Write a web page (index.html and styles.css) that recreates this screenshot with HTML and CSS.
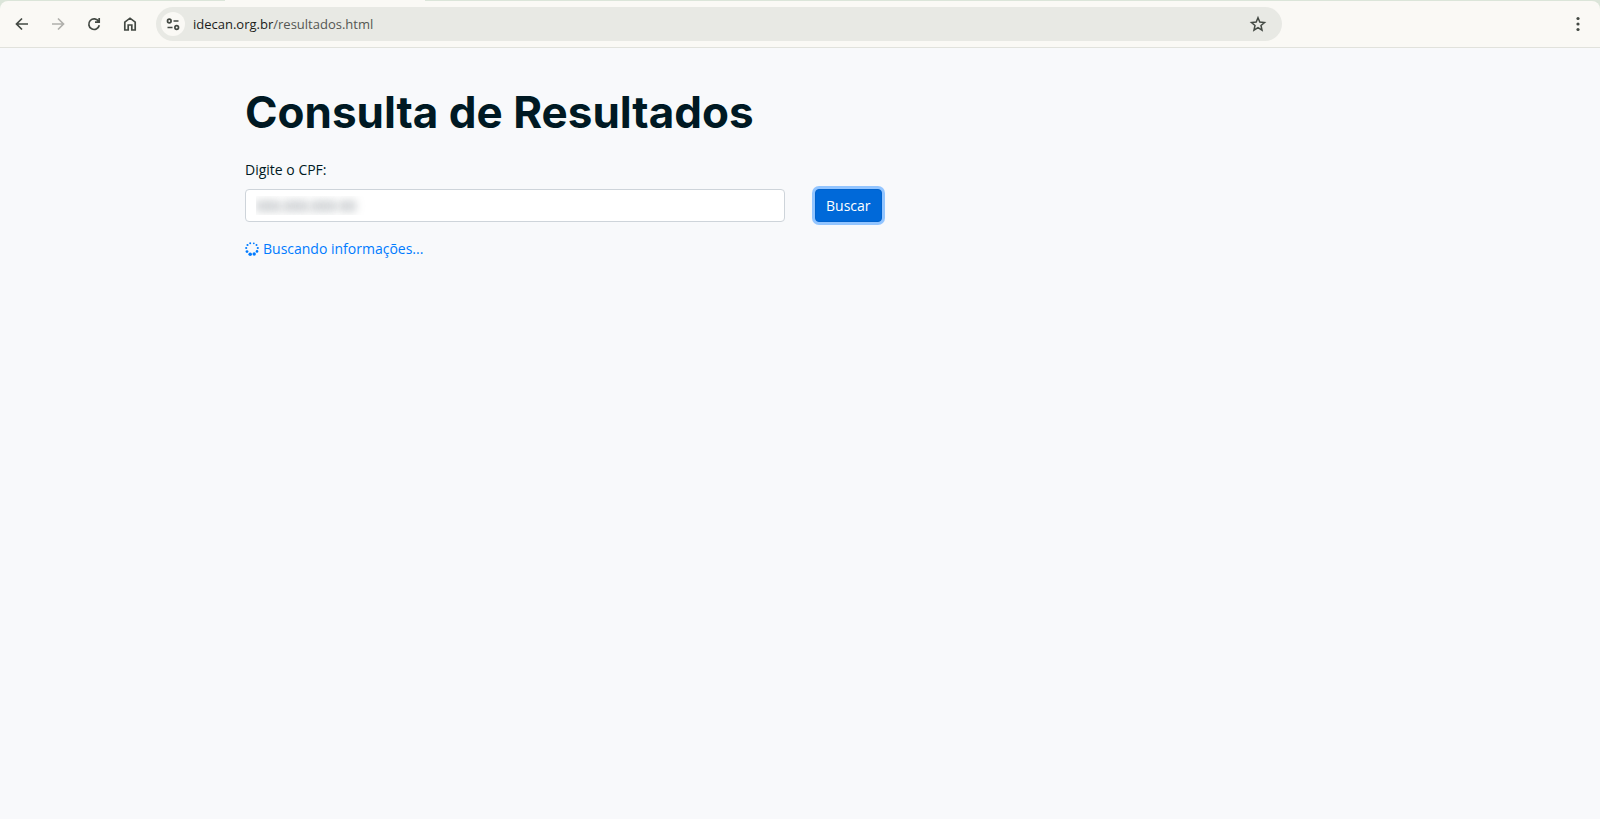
FILE: index.html
```html
<!DOCTYPE html>
<html lang="pt-br">

	<head>
		<meta charset="UTF-8">
		<title>Consulta de Resultados</title>
		<link rel="stylesheet" href="styles.css">
	</head>

	<body>
		<header class="browser">
			<div class="tabstrip">
				<div class="tab"></div>
			</div>
			<div class="toolbar">
				<button type="button" class="navBtn" aria-label="Voltar">
					<svg width="16" height="16" viewBox="0 0 16 16"><path d="M14 8H3M8 2.500L2.500 8L8 13.500" /></svg>
				</button>
				<button type="button" class="navBtn" aria-label="Avançar" disabled>
					<svg width="16" height="16" viewBox="0 0 16 16"><path d="M2 8H13M8 2.500L13.500 8L8 13.500" /></svg>
				</button>
				<button type="button" class="navBtn" aria-label="Recarregar">
					<svg width="16" height="16" viewBox="0 0 16 16"><path d="M12.700 5.500A5.300 5.300 0 1 0 13.300 9.300M13.200 2V6.200H9" /></svg>
				</button>
				<button type="button" class="navBtn" aria-label="Página inicial">
					<svg width="16" height="16" viewBox="0 0 16 16"><path d="M2.800 6.200L8 2.200L13.200 6.200V14H9.800V9H6.200V14H2.800Z" /></svg>
				</button>
				<div class="omnibox">
					<button type="button" class="siteInfo" aria-label="Informações do site">
						<svg width="16" height="16" viewBox="0 0 16 16"><circle cx="4.300" cy="5" r="1.800" /><path d="M8.500 5H13.500M2.500 11.500H7.500" /><circle cx="11.700" cy="11.500" r="1.800" /></svg>
					</button>
					<div class="url">idecan.org.br<span>/resultados.html</span></div>
					<button type="button" class="star" aria-label="Favoritos">
						<svg width="18" height="18" viewBox="0 0 18 18"><path d="M9 2.800L10.800 7.100L15.500 7.500L12 10.500L13 15.100L9 12.600L5 15.100L6 10.500L2.500 7.500L7.200 7.100Z" /></svg>
					</button>
				</div>
				<button type="button" class="navBtn menu" aria-label="Menu">
					<svg width="16" height="16" viewBox="0 0 16 16"><circle cx="8" cy="2.500" r="1.600" /><circle cx="8" cy="8" r="1.600" /><circle cx="8" cy="13.500" r="1.600" /></svg>
				</button>
			</div>
		</header>

		<main class="container">
			<h1>Consulta de Resultados</h1>
			<form>
				<label for="cpf">Digite o CPF:</label>
				<div class="row">
					<input type="text" id="cpf" class="cpf" value="000.000.000-00">
					<div class="col">
						<button type="button" class="btn">Buscar</button>
					</div>
				</div>
			</form>
			<p class="status">
				<svg class="spinner" width="14" height="14" viewBox="0 0 14 14">
					<circle cx="8.800" cy="1.300" r="0.900" />
					<circle cx="11.500" cy="3" r="1" />
					<circle cx="12.800" cy="6" r="1.100" />
					<circle cx="12" cy="9.400" r="1.300" />
					<circle cx="9.200" cy="12" r="1.700" />
					<circle cx="5.200" cy="12.200" r="1.800" />
					<circle cx="2" cy="9.600" r="1.400" />
					<circle cx="1.200" cy="6" r="1.100" />
					<circle cx="2.500" cy="3" r="1.100" />
					<circle cx="5.200" cy="1.300" r="1" />
				</svg>
				<span>Buscando informações...</span>
			</p>
		</main>
	</body>

</html>
```
FILE: styles.css
```css
* {
	margin: 0;
	padding: 0;
	box-sizing: border-box;
}

body {
	background: #f8f9fb;
	color: #001923;
	font: 14px/21px "Open Sans", sans-serif;
}

button {
	border: 0;
	background: none;
	font: inherit;
}

/* barra do navegador */
.browser {
	background: #dbe5d9;
	border-bottom: 1px solid #e1e2dc;
}

.tabstrip {
	height: 1px;
	padding-left: 225px;
}

.tab {
	width: 200px;
	height: 1px;
	background: #faf9f5;
}

.toolbar {
	display: flex;
	align-items: center;
	height: 46px;
	padding: 0 4px;
	background: #faf9f5;
	border-radius: 8px 8px 0 0;
}

.toolbar svg {
	fill: none;
	stroke: #434943;
	stroke-width: 1.7;
}

.navBtn {
	display: flex;
	align-items: center;
	justify-content: center;
	width: 36px;
	height: 34px;
}

.toolbar .navBtn:disabled svg {
	stroke: #b0b0ac;
}

.toolbar .menu svg {
	fill: #434943;
	stroke: none;
}

.omnibox {
	display: flex;
	flex: 1;
	align-items: center;
	height: 34px;
	margin: 0 278px 0 8px;
	padding: 0 15px 0 5px;
	background: #e8e9e4;
	border-radius: 17px;
}

.siteInfo {
	display: flex;
	align-items: center;
	justify-content: center;
	width: 24px;
	height: 24px;
	border-radius: 50%;
	background: #faf9f5;
}

.url {
	flex: 1;
	margin-left: 8px;
	color: #1b1c1a;
	font-size: 13px;
}

.url span {
	color: #555753;
}

.star {
	display: flex;
}

.star svg {
	stroke-width: 1.5;
}

/* conteudo */
.container {
	max-width: 1140px;
	margin: 0 auto;
	padding: 40px 15px;
}

h1 {
	margin-bottom: 23px;
	font: 700 44px/48px Inter, sans-serif;
}

label {
	display: block;
	margin-bottom: 9px;
}

.row {
	display: grid;
	grid-template-columns: 1fr 1fr;
	gap: 30px;
}

.cpf {
	height: 33px;
	padding: 0 10px;
	border: 1px solid #ced4da;
	border-radius: 4px;
	background: #fff;
	color: transparent;
	font: inherit;
	text-shadow: 0 0 8px #6c757d;
}

.btn {
	display: block;
	height: 33px;
	padding: 0 10px;
	border: 1px solid #0062cc;
	border-radius: 4px;
	background: #0069d9;
	box-shadow: 0 0 0 3px #93c5ff;
	color: #fff;
}

.status {
	display: flex;
	align-items: center;
	gap: 4px;
	margin-top: 16px;
	color: #007bff;
}

.spinner {
	fill: #007bff;
}
```
